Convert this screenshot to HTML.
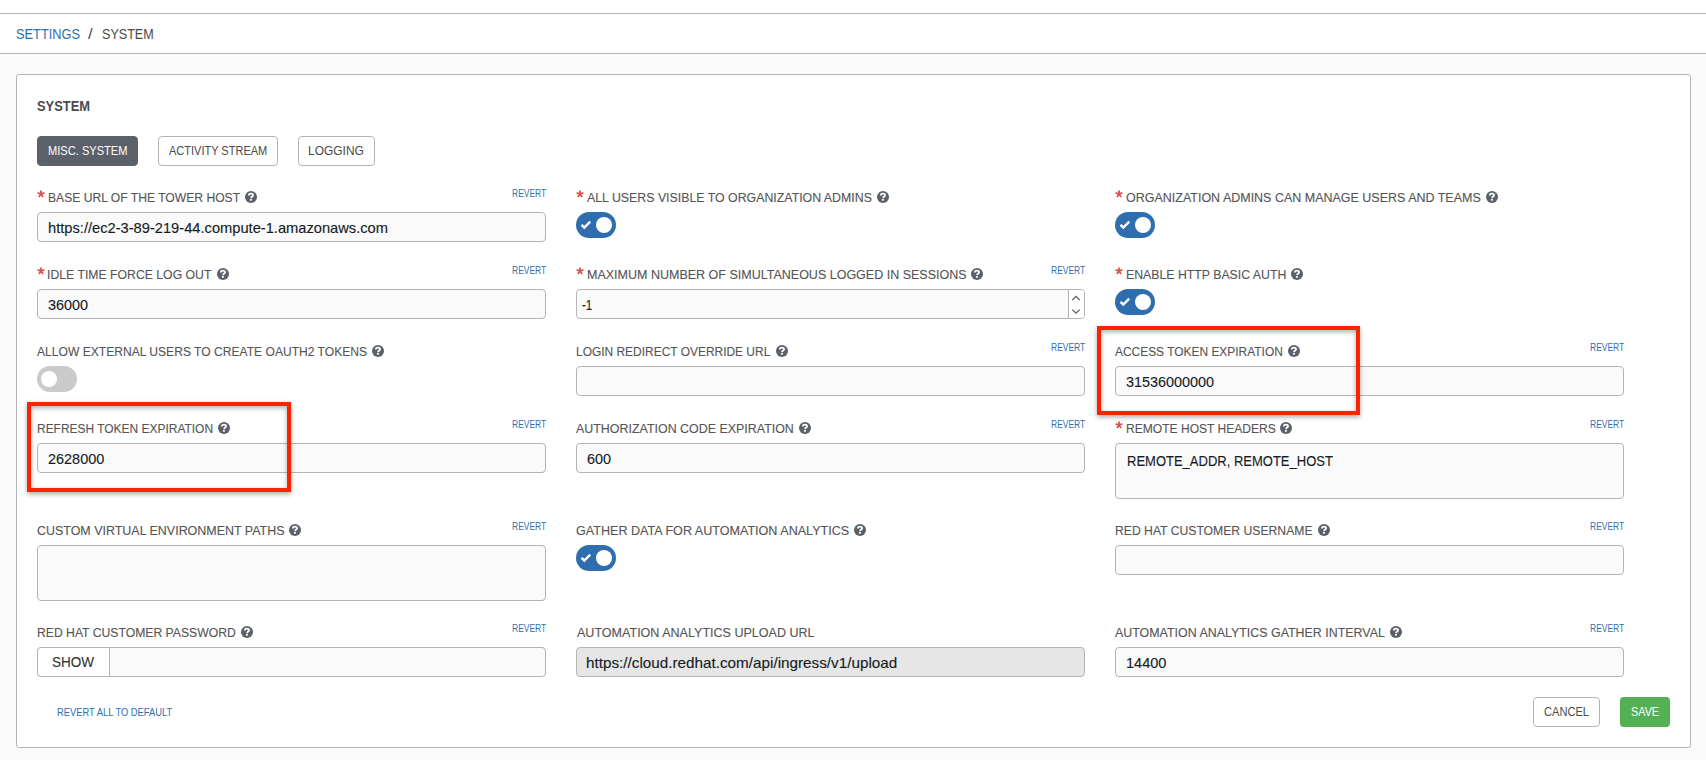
<!DOCTYPE html><html><head><meta charset="utf-8"><style>

*{box-sizing:border-box;margin:0;padding:0}
html,body{width:1706px;height:760px;overflow:hidden;background:#fafafa;font-family:"Liberation Sans",sans-serif;position:relative}
.a{position:absolute}
.top{left:0;top:0;width:1706px;height:55px;background:#fff}
.hl{left:0;width:1706px;height:1px;background:#b4b4b4}
.panel{left:16px;top:74px;width:1675px;height:674px;background:#fff;border:1px solid #b4b4b4;border-radius:3px}
.tab{top:136px;height:30px;border:1px solid #b4b4b4;border-radius:4px;background:#fff}
.tab.on{background:#5b606a;border-color:#5b606a}
.t{position:absolute;white-space:nowrap;line-height:20px;height:20px;transform-origin:0 0;}
.sk{-webkit-text-stroke:0.12px currentColor}
.ast{width:8px;height:8px}.ast svg{display:block}
.inp{height:30px;width:509px;background:#fafafa;border:1px solid #b4b4b4;border-radius:4px}
.ta{height:56px}
.dis{background:#e6e6e6}
.help{width:12px;height:12px}
.help svg{display:block}
.spin{width:16px;height:28px;border-left:1px solid #b4b4b4;background:#fff;border-radius:0 3px 3px 0}
.spin svg{display:block;margin-left:-1px}
.showb{width:73px;height:30px;border:1px solid #b4b4b4;border-radius:4px 0 0 4px;background:#fff}
.tog{width:40px;height:26px;border-radius:13px;background:#2e6eae}
.tog .k{position:absolute;left:20px;top:5px;width:16px;height:16px;border-radius:50%;background:#fff}
.tog .ck{position:absolute;left:4px;top:8px}
.tog.off{background:#cacaca}
.tog.off .k{left:4px}
.red{border:4px solid #fe2300;box-shadow:0 2px 5px rgba(0,0,0,.35), inset 0 2px 5px rgba(0,0,0,.32)}
.btn{height:30px;border-radius:4px}
.cancel{border:1px solid #b4b4b4;background:#fff}
.save{background:#54b054}

</style></head><body>
<div class="a top"></div><div class="a hl" style="top:13px"></div><div class="a hl" style="top:53px"></div>
<div class="a panel"></div>
<div class="a tab on" style="left:37px;width:101px"></div><div class="a tab" style="left:158px;width:120px"></div><div class="a tab" style="left:298px;width:77px"></div>
<div class="a ast" style="left:37px;top:190px"><svg width="8" height="8" viewBox="0 0 8 8"><line x1="4" y1="4" x2="4.00" y2="0.40" stroke="#d9534f" stroke-width="1.8"/><line x1="4" y1="4" x2="7.42" y2="2.89" stroke="#d9534f" stroke-width="1.8"/><line x1="4" y1="4" x2="6.12" y2="6.91" stroke="#d9534f" stroke-width="1.8"/><line x1="4" y1="4" x2="1.88" y2="6.91" stroke="#d9534f" stroke-width="1.8"/><line x1="4" y1="4" x2="0.58" y2="2.89" stroke="#d9534f" stroke-width="1.8"/></svg></div>
<div class="a help" style="left:245px;top:191px"><svg width="12" height="12" viewBox="0 0 12 12"><circle cx="6" cy="6" r="6" fill="#5b6069"/><path d="M3.8 4.6 C3.8 3.3 4.7 2.6 5.9 2.6 C7.2 2.6 8.1 3.4 8.1 4.3 C8.1 5.4 6.4 5.6 6.0 6.9" stroke="#fff" stroke-width="1.8" fill="none"/><rect x="4.95" y="7.9" width="1.9" height="1.8" fill="#fff"/></svg></div>
<div class="a inp" style="left:37px;top:212px"></div>
<div class="a ast" style="left:576px;top:190px"><svg width="8" height="8" viewBox="0 0 8 8"><line x1="4" y1="4" x2="4.00" y2="0.40" stroke="#d9534f" stroke-width="1.8"/><line x1="4" y1="4" x2="7.42" y2="2.89" stroke="#d9534f" stroke-width="1.8"/><line x1="4" y1="4" x2="6.12" y2="6.91" stroke="#d9534f" stroke-width="1.8"/><line x1="4" y1="4" x2="1.88" y2="6.91" stroke="#d9534f" stroke-width="1.8"/><line x1="4" y1="4" x2="0.58" y2="2.89" stroke="#d9534f" stroke-width="1.8"/></svg></div>
<div class="a help" style="left:877px;top:191px"><svg width="12" height="12" viewBox="0 0 12 12"><circle cx="6" cy="6" r="6" fill="#5b6069"/><path d="M3.8 4.6 C3.8 3.3 4.7 2.6 5.9 2.6 C7.2 2.6 8.1 3.4 8.1 4.3 C8.1 5.4 6.4 5.6 6.0 6.9" stroke="#fff" stroke-width="1.8" fill="none"/><rect x="4.95" y="7.9" width="1.9" height="1.8" fill="#fff"/></svg></div>
<div class="a tog " style="left:576px;top:212px"><svg class="ck" width="12" height="10" viewBox="0 0 12 10"><path d="M1.5 4.9 L4.3 7.5 L10.2 1.7" stroke="#fff" stroke-width="2.4" fill="none" stroke-linecap="butt"/></svg><div class="k"></div></div>
<div class="a ast" style="left:1115px;top:190px"><svg width="8" height="8" viewBox="0 0 8 8"><line x1="4" y1="4" x2="4.00" y2="0.40" stroke="#d9534f" stroke-width="1.8"/><line x1="4" y1="4" x2="7.42" y2="2.89" stroke="#d9534f" stroke-width="1.8"/><line x1="4" y1="4" x2="6.12" y2="6.91" stroke="#d9534f" stroke-width="1.8"/><line x1="4" y1="4" x2="1.88" y2="6.91" stroke="#d9534f" stroke-width="1.8"/><line x1="4" y1="4" x2="0.58" y2="2.89" stroke="#d9534f" stroke-width="1.8"/></svg></div>
<div class="a help" style="left:1486px;top:191px"><svg width="12" height="12" viewBox="0 0 12 12"><circle cx="6" cy="6" r="6" fill="#5b6069"/><path d="M3.8 4.6 C3.8 3.3 4.7 2.6 5.9 2.6 C7.2 2.6 8.1 3.4 8.1 4.3 C8.1 5.4 6.4 5.6 6.0 6.9" stroke="#fff" stroke-width="1.8" fill="none"/><rect x="4.95" y="7.9" width="1.9" height="1.8" fill="#fff"/></svg></div>
<div class="a tog " style="left:1115px;top:212px"><svg class="ck" width="12" height="10" viewBox="0 0 12 10"><path d="M1.5 4.9 L4.3 7.5 L10.2 1.7" stroke="#fff" stroke-width="2.4" fill="none" stroke-linecap="butt"/></svg><div class="k"></div></div>
<div class="a ast" style="left:37px;top:267px"><svg width="8" height="8" viewBox="0 0 8 8"><line x1="4" y1="4" x2="4.00" y2="0.40" stroke="#d9534f" stroke-width="1.8"/><line x1="4" y1="4" x2="7.42" y2="2.89" stroke="#d9534f" stroke-width="1.8"/><line x1="4" y1="4" x2="6.12" y2="6.91" stroke="#d9534f" stroke-width="1.8"/><line x1="4" y1="4" x2="1.88" y2="6.91" stroke="#d9534f" stroke-width="1.8"/><line x1="4" y1="4" x2="0.58" y2="2.89" stroke="#d9534f" stroke-width="1.8"/></svg></div>
<div class="a help" style="left:217px;top:268px"><svg width="12" height="12" viewBox="0 0 12 12"><circle cx="6" cy="6" r="6" fill="#5b6069"/><path d="M3.8 4.6 C3.8 3.3 4.7 2.6 5.9 2.6 C7.2 2.6 8.1 3.4 8.1 4.3 C8.1 5.4 6.4 5.6 6.0 6.9" stroke="#fff" stroke-width="1.8" fill="none"/><rect x="4.95" y="7.9" width="1.9" height="1.8" fill="#fff"/></svg></div>
<div class="a inp" style="left:37px;top:289px"></div>
<div class="a ast" style="left:576px;top:267px"><svg width="8" height="8" viewBox="0 0 8 8"><line x1="4" y1="4" x2="4.00" y2="0.40" stroke="#d9534f" stroke-width="1.8"/><line x1="4" y1="4" x2="7.42" y2="2.89" stroke="#d9534f" stroke-width="1.8"/><line x1="4" y1="4" x2="6.12" y2="6.91" stroke="#d9534f" stroke-width="1.8"/><line x1="4" y1="4" x2="1.88" y2="6.91" stroke="#d9534f" stroke-width="1.8"/><line x1="4" y1="4" x2="0.58" y2="2.89" stroke="#d9534f" stroke-width="1.8"/></svg></div>
<div class="a help" style="left:971px;top:268px"><svg width="12" height="12" viewBox="0 0 12 12"><circle cx="6" cy="6" r="6" fill="#5b6069"/><path d="M3.8 4.6 C3.8 3.3 4.7 2.6 5.9 2.6 C7.2 2.6 8.1 3.4 8.1 4.3 C8.1 5.4 6.4 5.6 6.0 6.9" stroke="#fff" stroke-width="1.8" fill="none"/><rect x="4.95" y="7.9" width="1.9" height="1.8" fill="#fff"/></svg></div>
<div class="a inp" style="left:576px;top:289px"></div>
<div class="a spin" style="left:1068px;top:290px"><svg width="16" height="28" viewBox="0 0 16 28"><path d="M4.3 10 L8 6.4 L11.7 10" stroke="#5b6069" stroke-width="1.2" fill="none"/><path d="M4.3 19.6 L8 23.2 L11.7 19.6" stroke="#5b6069" stroke-width="1.2" fill="none"/></svg></div>
<div class="a ast" style="left:1115px;top:267px"><svg width="8" height="8" viewBox="0 0 8 8"><line x1="4" y1="4" x2="4.00" y2="0.40" stroke="#d9534f" stroke-width="1.8"/><line x1="4" y1="4" x2="7.42" y2="2.89" stroke="#d9534f" stroke-width="1.8"/><line x1="4" y1="4" x2="6.12" y2="6.91" stroke="#d9534f" stroke-width="1.8"/><line x1="4" y1="4" x2="1.88" y2="6.91" stroke="#d9534f" stroke-width="1.8"/><line x1="4" y1="4" x2="0.58" y2="2.89" stroke="#d9534f" stroke-width="1.8"/></svg></div>
<div class="a help" style="left:1291px;top:268px"><svg width="12" height="12" viewBox="0 0 12 12"><circle cx="6" cy="6" r="6" fill="#5b6069"/><path d="M3.8 4.6 C3.8 3.3 4.7 2.6 5.9 2.6 C7.2 2.6 8.1 3.4 8.1 4.3 C8.1 5.4 6.4 5.6 6.0 6.9" stroke="#fff" stroke-width="1.8" fill="none"/><rect x="4.95" y="7.9" width="1.9" height="1.8" fill="#fff"/></svg></div>
<div class="a tog " style="left:1115px;top:289px"><svg class="ck" width="12" height="10" viewBox="0 0 12 10"><path d="M1.5 4.9 L4.3 7.5 L10.2 1.7" stroke="#fff" stroke-width="2.4" fill="none" stroke-linecap="butt"/></svg><div class="k"></div></div>
<div class="a help" style="left:372px;top:345px"><svg width="12" height="12" viewBox="0 0 12 12"><circle cx="6" cy="6" r="6" fill="#5b6069"/><path d="M3.8 4.6 C3.8 3.3 4.7 2.6 5.9 2.6 C7.2 2.6 8.1 3.4 8.1 4.3 C8.1 5.4 6.4 5.6 6.0 6.9" stroke="#fff" stroke-width="1.8" fill="none"/><rect x="4.95" y="7.9" width="1.9" height="1.8" fill="#fff"/></svg></div>
<div class="a tog off" style="left:37px;top:366px"><div class="k"></div></div>
<div class="a help" style="left:776px;top:345px"><svg width="12" height="12" viewBox="0 0 12 12"><circle cx="6" cy="6" r="6" fill="#5b6069"/><path d="M3.8 4.6 C3.8 3.3 4.7 2.6 5.9 2.6 C7.2 2.6 8.1 3.4 8.1 4.3 C8.1 5.4 6.4 5.6 6.0 6.9" stroke="#fff" stroke-width="1.8" fill="none"/><rect x="4.95" y="7.9" width="1.9" height="1.8" fill="#fff"/></svg></div>
<div class="a inp" style="left:576px;top:366px"></div>
<div class="a help" style="left:1288px;top:345px"><svg width="12" height="12" viewBox="0 0 12 12"><circle cx="6" cy="6" r="6" fill="#5b6069"/><path d="M3.8 4.6 C3.8 3.3 4.7 2.6 5.9 2.6 C7.2 2.6 8.1 3.4 8.1 4.3 C8.1 5.4 6.4 5.6 6.0 6.9" stroke="#fff" stroke-width="1.8" fill="none"/><rect x="4.95" y="7.9" width="1.9" height="1.8" fill="#fff"/></svg></div>
<div class="a inp" style="left:1115px;top:366px"></div>
<div class="a help" style="left:218px;top:422px"><svg width="12" height="12" viewBox="0 0 12 12"><circle cx="6" cy="6" r="6" fill="#5b6069"/><path d="M3.8 4.6 C3.8 3.3 4.7 2.6 5.9 2.6 C7.2 2.6 8.1 3.4 8.1 4.3 C8.1 5.4 6.4 5.6 6.0 6.9" stroke="#fff" stroke-width="1.8" fill="none"/><rect x="4.95" y="7.9" width="1.9" height="1.8" fill="#fff"/></svg></div>
<div class="a inp" style="left:37px;top:443px"></div>
<div class="a help" style="left:799px;top:422px"><svg width="12" height="12" viewBox="0 0 12 12"><circle cx="6" cy="6" r="6" fill="#5b6069"/><path d="M3.8 4.6 C3.8 3.3 4.7 2.6 5.9 2.6 C7.2 2.6 8.1 3.4 8.1 4.3 C8.1 5.4 6.4 5.6 6.0 6.9" stroke="#fff" stroke-width="1.8" fill="none"/><rect x="4.95" y="7.9" width="1.9" height="1.8" fill="#fff"/></svg></div>
<div class="a inp" style="left:576px;top:443px"></div>
<div class="a ast" style="left:1115px;top:421px"><svg width="8" height="8" viewBox="0 0 8 8"><line x1="4" y1="4" x2="4.00" y2="0.40" stroke="#d9534f" stroke-width="1.8"/><line x1="4" y1="4" x2="7.42" y2="2.89" stroke="#d9534f" stroke-width="1.8"/><line x1="4" y1="4" x2="6.12" y2="6.91" stroke="#d9534f" stroke-width="1.8"/><line x1="4" y1="4" x2="1.88" y2="6.91" stroke="#d9534f" stroke-width="1.8"/><line x1="4" y1="4" x2="0.58" y2="2.89" stroke="#d9534f" stroke-width="1.8"/></svg></div>
<div class="a help" style="left:1280px;top:422px"><svg width="12" height="12" viewBox="0 0 12 12"><circle cx="6" cy="6" r="6" fill="#5b6069"/><path d="M3.8 4.6 C3.8 3.3 4.7 2.6 5.9 2.6 C7.2 2.6 8.1 3.4 8.1 4.3 C8.1 5.4 6.4 5.6 6.0 6.9" stroke="#fff" stroke-width="1.8" fill="none"/><rect x="4.95" y="7.9" width="1.9" height="1.8" fill="#fff"/></svg></div>
<div class="a inp ta" style="left:1115px;top:443px"></div>
<div class="a help" style="left:289px;top:524px"><svg width="12" height="12" viewBox="0 0 12 12"><circle cx="6" cy="6" r="6" fill="#5b6069"/><path d="M3.8 4.6 C3.8 3.3 4.7 2.6 5.9 2.6 C7.2 2.6 8.1 3.4 8.1 4.3 C8.1 5.4 6.4 5.6 6.0 6.9" stroke="#fff" stroke-width="1.8" fill="none"/><rect x="4.95" y="7.9" width="1.9" height="1.8" fill="#fff"/></svg></div>
<div class="a inp ta" style="left:37px;top:545px"></div>
<div class="a help" style="left:854px;top:524px"><svg width="12" height="12" viewBox="0 0 12 12"><circle cx="6" cy="6" r="6" fill="#5b6069"/><path d="M3.8 4.6 C3.8 3.3 4.7 2.6 5.9 2.6 C7.2 2.6 8.1 3.4 8.1 4.3 C8.1 5.4 6.4 5.6 6.0 6.9" stroke="#fff" stroke-width="1.8" fill="none"/><rect x="4.95" y="7.9" width="1.9" height="1.8" fill="#fff"/></svg></div>
<div class="a tog " style="left:576px;top:545px"><svg class="ck" width="12" height="10" viewBox="0 0 12 10"><path d="M1.5 4.9 L4.3 7.5 L10.2 1.7" stroke="#fff" stroke-width="2.4" fill="none" stroke-linecap="butt"/></svg><div class="k"></div></div>
<div class="a help" style="left:1318px;top:524px"><svg width="12" height="12" viewBox="0 0 12 12"><circle cx="6" cy="6" r="6" fill="#5b6069"/><path d="M3.8 4.6 C3.8 3.3 4.7 2.6 5.9 2.6 C7.2 2.6 8.1 3.4 8.1 4.3 C8.1 5.4 6.4 5.6 6.0 6.9" stroke="#fff" stroke-width="1.8" fill="none"/><rect x="4.95" y="7.9" width="1.9" height="1.8" fill="#fff"/></svg></div>
<div class="a inp" style="left:1115px;top:545px"></div>
<div class="a help" style="left:241px;top:626px"><svg width="12" height="12" viewBox="0 0 12 12"><circle cx="6" cy="6" r="6" fill="#5b6069"/><path d="M3.8 4.6 C3.8 3.3 4.7 2.6 5.9 2.6 C7.2 2.6 8.1 3.4 8.1 4.3 C8.1 5.4 6.4 5.6 6.0 6.9" stroke="#fff" stroke-width="1.8" fill="none"/><rect x="4.95" y="7.9" width="1.9" height="1.8" fill="#fff"/></svg></div>
<div class="a inp" style="left:37px;top:647px"></div>
<div class="a showb" style="left:37px;top:647px"></div>
<div class="a inp dis" style="left:576px;top:647px"></div>
<div class="a help" style="left:1390px;top:626px"><svg width="12" height="12" viewBox="0 0 12 12"><circle cx="6" cy="6" r="6" fill="#5b6069"/><path d="M3.8 4.6 C3.8 3.3 4.7 2.6 5.9 2.6 C7.2 2.6 8.1 3.4 8.1 4.3 C8.1 5.4 6.4 5.6 6.0 6.9" stroke="#fff" stroke-width="1.8" fill="none"/><rect x="4.95" y="7.9" width="1.9" height="1.8" fill="#fff"/></svg></div>
<div class="a inp" style="left:1115px;top:647px"></div>
<div class="a btn cancel" style="left:1533px;top:697px;width:67px"></div>
<div class="a btn save" style="left:1620px;top:697px;width:50px"></div>
<div class="t" id="t0" style="font-size:14.5px;color:#2e6fb0;top:24px;left:15.82px;transform:scaleX(0.8821);">SETTINGS</div>
<div class="t" id="t1" style="font-size:14.5px;color:#4a4a4a;top:24px;left:88.30px;transform:scaleX(1.1659);">/</div>
<div class="t" id="t2" style="font-size:14.5px;color:#4a4a4a;top:24px;left:102.33px;transform:scaleX(0.8671);">SYSTEM</div>
<div class="t" id="t3" style="font-size:14.5px;color:#4b4b4b;top:96px;font-weight:bold;left:36.93px;transform:scaleX(0.8895);">SYSTEM</div>
<div class="t" id="t4" style="font-size:12.9px;color:#ffffff;top:141px;left:47.69px;transform:scaleX(0.8606);">MISC. SYSTEM</div>
<div class="t" id="t5" style="font-size:12.9px;color:#4b4b4b;top:141px;left:168.98px;transform:scaleX(0.8535);">ACTIVITY STREAM</div>
<div class="t" id="t6" style="font-size:12.9px;color:#4b4b4b;top:141px;left:308.22px;transform:scaleX(0.9286);">LOGGING</div>
<div class="t sk" id="t7" style="font-size:13.5px;color:#555555;top:188px;left:48.01px;transform:scaleX(0.8973);">BASE URL OF THE TOWER HOST</div>
<div class="t" id="t8" style="font-size:10.0px;color:#2e6fb0;top:184px;left:511.90px;transform:scaleX(0.8490);">REVERT</div>
<div class="t sk" id="t9" style="font-size:14.5px;color:#161b1f;top:218px;left:47.98px;transform:scaleX(1.0116);">https://ec2-3-89-219-44.compute-1.amazonaws.com</div>
<div class="t sk" id="t10" style="font-size:13.5px;color:#555555;top:188px;left:587.38px;transform:scaleX(0.9143);">ALL USERS VISIBLE TO ORGANIZATION ADMINS</div>
<div class="t sk" id="t11" style="font-size:13.5px;color:#555555;top:188px;left:1125.81px;transform:scaleX(0.9249);">ORGANIZATION ADMINS CAN MANAGE USERS AND TEAMS</div>
<div class="t sk" id="t12" style="font-size:13.5px;color:#555555;top:265px;left:47.37px;transform:scaleX(0.9069);">IDLE TIME FORCE LOG OUT</div>
<div class="t" id="t13" style="font-size:10.0px;color:#2e6fb0;top:261px;left:511.90px;transform:scaleX(0.8490);">REVERT</div>
<div class="t sk" id="t14" style="font-size:14.5px;color:#161b1f;top:295px;left:47.95px;transform:scaleX(0.9947);">36000</div>
<div class="t sk" id="t15" style="font-size:13.5px;color:#555555;top:265px;left:586.67px;transform:scaleX(0.9263);">MAXIMUM NUMBER OF SIMULTANEOUS LOGGED IN SESSIONS</div>
<div class="t" id="t16" style="font-size:10.0px;color:#2e6fb0;top:261px;left:1050.90px;transform:scaleX(0.8490);">REVERT</div>
<div class="t sk" id="t17" style="font-size:14.5px;color:#161b1f;top:295px;left:582.39px;transform:scaleX(0.7963);">-1</div>
<div class="t sk" id="t18" style="font-size:13.5px;color:#555555;top:265px;left:1125.69px;transform:scaleX(0.9105);">ENABLE HTTP BASIC AUTH</div>
<div class="t sk" id="t19" style="font-size:13.5px;color:#555555;top:342px;left:36.98px;transform:scaleX(0.8949);">ALLOW EXTERNAL USERS TO CREATE OAUTH2 TOKENS</div>
<div class="t sk" id="t20" style="font-size:13.5px;color:#555555;top:342px;left:576.22px;transform:scaleX(0.8849);">LOGIN REDIRECT OVERRIDE URL</div>
<div class="t" id="t21" style="font-size:10.0px;color:#2e6fb0;top:338px;left:1050.90px;transform:scaleX(0.8490);">REVERT</div>
<div class="t sk" id="t22" style="font-size:13.5px;color:#555555;top:342px;left:1115.28px;transform:scaleX(0.8840);">ACCESS TOKEN EXPIRATION</div>
<div class="t" id="t23" style="font-size:10.0px;color:#2e6fb0;top:338px;left:1589.90px;transform:scaleX(0.8490);">REVERT</div>
<div class="t sk" id="t24" style="font-size:14.5px;color:#161b1f;top:372px;left:1125.65px;transform:scaleX(0.9931);">31536000000</div>
<div class="t sk" id="t25" style="font-size:13.5px;color:#555555;top:419px;left:37.22px;transform:scaleX(0.8856);">REFRESH TOKEN EXPIRATION</div>
<div class="t" id="t26" style="font-size:10.0px;color:#2e6fb0;top:415px;left:511.90px;transform:scaleX(0.8490);">REVERT</div>
<div class="t sk" id="t27" style="font-size:14.5px;color:#161b1f;top:449px;left:47.77px;transform:scaleX(0.9971);">2628000</div>
<div class="t sk" id="t28" style="font-size:13.5px;color:#555555;top:419px;left:576.18px;transform:scaleX(0.9210);">AUTHORIZATION CODE EXPIRATION</div>
<div class="t" id="t29" style="font-size:10.0px;color:#2e6fb0;top:415px;left:1050.90px;transform:scaleX(0.8490);">REVERT</div>
<div class="t sk" id="t30" style="font-size:14.5px;color:#161b1f;top:449px;left:586.87px;transform:scaleX(0.9956);">600</div>
<div class="t sk" id="t31" style="font-size:13.5px;color:#555555;top:419px;left:1125.71px;transform:scaleX(0.8931);">REMOTE HOST HEADERS</div>
<div class="t" id="t32" style="font-size:10.0px;color:#2e6fb0;top:415px;left:1589.90px;transform:scaleX(0.8490);">REVERT</div>
<div class="t sk" id="t33" style="font-size:14.5px;color:#161b1f;top:451px;left:1127.43px;transform:scaleX(0.8966);">REMOTE_ADDR, REMOTE_HOST</div>
<div class="t sk" id="t34" style="font-size:13.5px;color:#555555;top:521px;left:37.17px;transform:scaleX(0.9225);">CUSTOM VIRTUAL ENVIRONMENT PATHS</div>
<div class="t" id="t35" style="font-size:10.0px;color:#2e6fb0;top:517px;left:511.90px;transform:scaleX(0.8490);">REVERT</div>
<div class="t sk" id="t36" style="font-size:13.5px;color:#555555;top:521px;left:576.07px;transform:scaleX(0.9315);">GATHER DATA FOR AUTOMATION ANALYTICS</div>
<div class="t sk" id="t37" style="font-size:13.5px;color:#555555;top:521px;left:1115.20px;transform:scaleX(0.9018);">RED HAT CUSTOMER USERNAME</div>
<div class="t" id="t38" style="font-size:10.0px;color:#2e6fb0;top:517px;left:1589.90px;transform:scaleX(0.8490);">REVERT</div>
<div class="t sk" id="t39" style="font-size:13.5px;color:#555555;top:623px;left:37.00px;transform:scaleX(0.9024);">RED HAT CUSTOMER PASSWORD</div>
<div class="t" id="t40" style="font-size:10.0px;color:#2e6fb0;top:619px;left:511.90px;transform:scaleX(0.8490);">REVERT</div>
<div class="t sk" id="t41" style="font-size:14.5px;color:#333;top:652px;left:52.19px;transform:scaleX(0.9324);">SHOW</div>
<div class="t sk" id="t42" style="font-size:13.5px;color:#555555;top:623px;left:576.58px;transform:scaleX(0.9286);">AUTOMATION ANALYTICS UPLOAD URL</div>
<div class="t sk" id="t43" style="font-size:14.5px;color:#161b1f;top:653px;left:586.34px;transform:scaleX(1.0521);">https://cloud.redhat.com/api/ingress/v1/upload</div>
<div class="t sk" id="t44" style="font-size:13.5px;color:#555555;top:623px;left:1115.28px;transform:scaleX(0.9200);">AUTOMATION ANALYTICS GATHER INTERVAL</div>
<div class="t" id="t45" style="font-size:10.0px;color:#2e6fb0;top:619px;left:1589.90px;transform:scaleX(0.8490);">REVERT</div>
<div class="t sk" id="t46" style="font-size:14.5px;color:#161b1f;top:653px;left:1125.59px;transform:scaleX(1.0011);">14400</div>
<div class="t" id="t47" style="font-size:11.4px;color:#2e6fb0;top:702px;left:56.73px;transform:scaleX(0.8215);">REVERT ALL TO DEFAULT</div>
<div class="t" id="t48" style="font-size:12.9px;color:#4b4b4b;top:702px;left:1544.14px;transform:scaleX(0.8611);">CANCEL</div>
<div class="t" id="t49" style="font-size:12.9px;color:#ffffff;top:702px;left:1630.91px;transform:scaleX(0.8391);">SAVE</div>
<div class="a red" style="left:1097px;top:326px;width:263px;height:89px"></div>
<div class="a red" style="left:27px;top:402px;width:264px;height:90px"></div>
</body></html>
